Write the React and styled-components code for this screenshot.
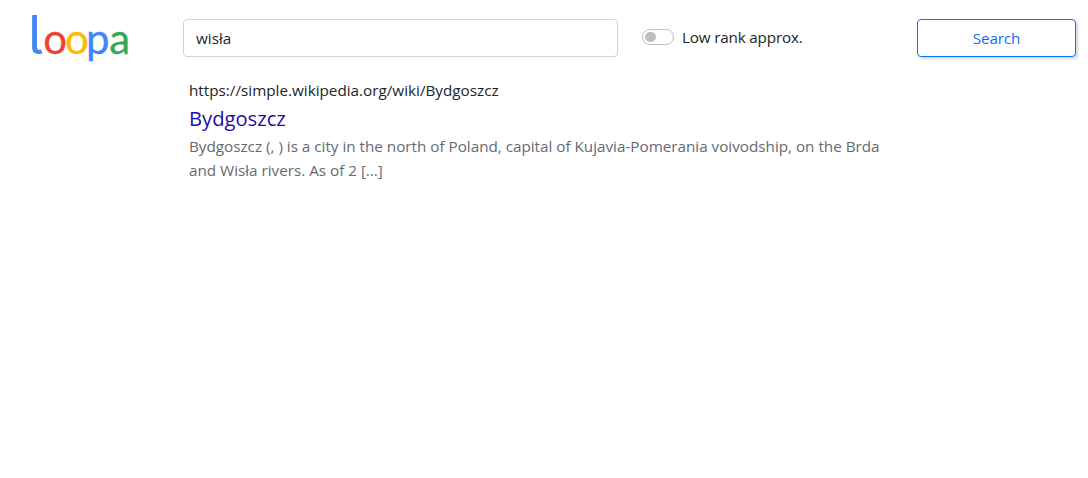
import React from "react";
import styled, { createGlobalStyle } from "styled-components";

const GlobalStyle = createGlobalStyle`
  * { box-sizing: border-box; }
  body {
    margin: 0;
    background: #fff;
    color: #212529;
    font-family: "Segoe UI", "Open Sans", "Noto Sans", sans-serif;
    font-size: 15.25px;
    line-height: 24px;
  }
`;

const Page = styled.main`
  min-height: 478px;
`;

const Toolbar = styled.form`
  display: grid;
  grid-template-columns: 183px 435px 299px 159px;
  align-items: start;
  height: 78px;
  padding-top: 19px;
`;

const LogoLink = styled.a`
  display: block;
  height: 78px;
  margin: -19px 0 0 24px;
`;

const LogoArt = styled.svg`
  display: block;
  overflow: visible;
  font-family: Lato, sans-serif;
  font-size: 42px;
`;

const LogoLetter = styled.text`
  fill: ${(p) => p.$color};
  stroke: ${(p) => p.$color};
  stroke-width: 0.3px;
`;

const TallLetter = styled(LogoLetter)`
  font-family: Inter, sans-serif;
  font-size: 54px;
  font-weight: 400;
  font-feature-settings: "cv05";
  stroke-width: 0;
`;

const SearchInput = styled.input`
  height: 38px;
  width: 100%;
  padding: 6px 12px;
  border: 1px solid #ced4da;
  border-radius: 4px;
  background: #fff;
  color: #212529;
  font: inherit;
  outline: none;
`;

const SwitchLabel = styled.label`
  display: flex;
  align-items: center;
  gap: 8px;
  height: 24px;
  margin: 6px 0 0 24px;
  letter-spacing: -0.18px;
`;

const Switch = styled.span`
  display: flex;
  align-items: center;
  width: 32px;
  height: 16px;
  padding: 0 2px;
  border: 1px solid #bfbfbf;
  border-radius: 8px;
`;

const Knob = styled.span`
  width: 10.5px;
  height: 10.5px;
  border-radius: 50%;
  background: #bfbfbf;
`;

const SearchButton = styled.button`
  height: 38px;
  padding: 0;
  border: 1px solid #0d6efd;
  border-radius: 4px;
  background: #fff;
  color: #0d6efd;
  font: inherit;
  letter-spacing: -0.15px;
  box-shadow: 2px 2px 3px rgba(0, 0, 0, 0.16);
`;

const Result = styled.article`
  width: 710px;
  margin-left: 189px;
`;

const ResultUrl = styled.div`
  height: 26px;
`;

const ResultTitle = styled.a`
  display: block;
  height: 30px;
  color: #1a0dab;
  font-size: 20.2px;
  line-height: 28px;
`;

const ResultText = styled.p`
  margin: 0;
  color: #666a70;
  letter-spacing: -0.01px;
  white-space: nowrap;
`;

function Logo() {
  return (
    <LogoArt width="112" height="78" viewBox="0 0 112 78" role="img" aria-label="loopa">
      <TallLetter x="4" y="53.5" $color="#4285f4">l</TallLetter>
      <LogoLetter x="19.2" y="53.5" $color="#ea4335">o</LogoLetter>
      <LogoLetter x="41" y="53.5" $color="#fbbc05">o</LogoLetter>
      <LogoLetter x="62" y="53.5" $color="#4285f4" textLength="23">p</LogoLetter>
      <LogoLetter x="85.2" y="53.5" $color="#34a853">a</LogoLetter>
    </LogoArt>
  );
}

export default function App() {
  return (
    <Page>
      <GlobalStyle />
      <Toolbar onSubmit={(e) => e.preventDefault()}>
        <LogoLink><Logo /></LogoLink>
        <SearchInput defaultValue="wisła" aria-label="Search query" />
        <SwitchLabel>
          <Switch><Knob /></Switch>
          Low rank approx.
        </SwitchLabel>
        <SearchButton type="submit">Search</SearchButton>
      </Toolbar>
      <Result>
        <ResultUrl>https://simple.wikipedia.org/wiki/Bydgoszcz</ResultUrl>
        <ResultTitle>Bydgoszcz</ResultTitle>
        <ResultText>
          Bydgoszcz (, ) is a city in the north of Poland, capital of Kujavia-Pomerania voivodship, on the Brda
          <br />
          and Wisła rivers. As of 2 [...]
        </ResultText>
      </Result>
    </Page>
  );
}
